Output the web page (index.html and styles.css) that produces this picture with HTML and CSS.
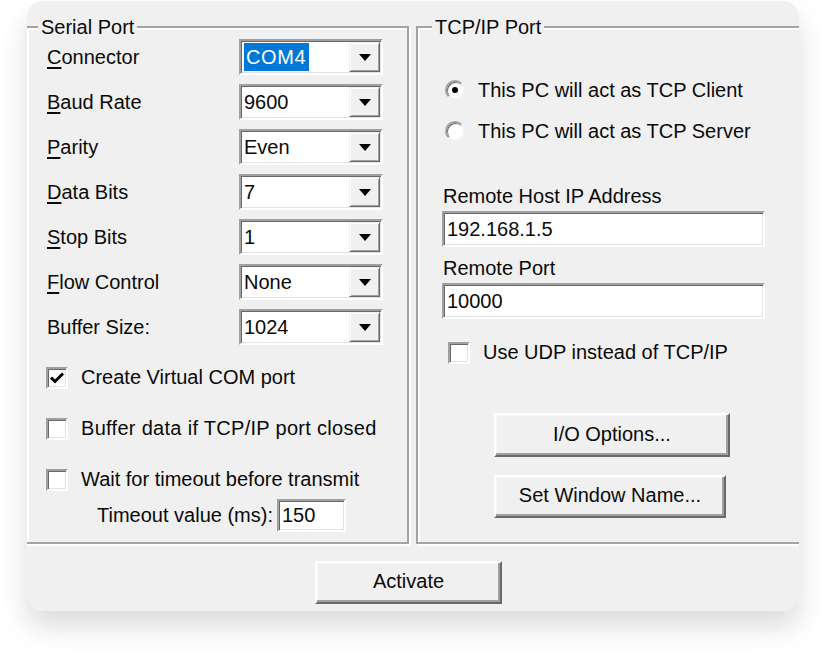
FILE: index.html
```html
<!DOCTYPE html>
<html>
<head>
<meta charset="utf-8">
<link rel="stylesheet" href="styles.css">
</head>
<body>
<div class="card">
  <div class="groups">
    <div class="group group-serial">
      <span class="legend">Serial Port</span>
      <div class="fields">
        <div class="field-row"><span class="label"><u>C</u>onnector</span><div class="combo"><span class="val"><span class="sel">COM4</span></span><span class="drop"><svg width="12" height="7" viewBox="0 0 12 7"><path d="M0 0H12L6 7Z" fill="#000"/></svg></span></div></div>
        <div class="field-row"><span class="label"><u>B</u>aud Rate</span><div class="combo"><span class="val">9600</span><span class="drop"><svg width="12" height="7" viewBox="0 0 12 7"><path d="M0 0H12L6 7Z" fill="#000"/></svg></span></div></div>
        <div class="field-row"><span class="label"><u>P</u>arity</span><div class="combo"><span class="val">Even</span><span class="drop"><svg width="12" height="7" viewBox="0 0 12 7"><path d="M0 0H12L6 7Z" fill="#000"/></svg></span></div></div>
        <div class="field-row"><span class="label"><u>D</u>ata Bits</span><div class="combo"><span class="val">7</span><span class="drop"><svg width="12" height="7" viewBox="0 0 12 7"><path d="M0 0H12L6 7Z" fill="#000"/></svg></span></div></div>
        <div class="field-row"><span class="label"><u>S</u>top Bits</span><div class="combo"><span class="val">1</span><span class="drop"><svg width="12" height="7" viewBox="0 0 12 7"><path d="M0 0H12L6 7Z" fill="#000"/></svg></span></div></div>
        <div class="field-row"><span class="label"><u>F</u>low Control</span><div class="combo"><span class="val">None</span><span class="drop"><svg width="12" height="7" viewBox="0 0 12 7"><path d="M0 0H12L6 7Z" fill="#000"/></svg></span></div></div>
        <div class="field-row"><span class="label">Buffer Size:</span><div class="combo"><span class="val">1024</span><span class="drop"><svg width="12" height="7" viewBox="0 0 12 7"><path d="M0 0H12L6 7Z" fill="#000"/></svg></span></div></div>
      </div>
      <div class="checks">
        <div class="check-row"><span class="checkbox"><svg width="16" height="14" viewBox="0 0 16 14"><path d="M2 6.5L6 10.5L14 2.5" fill="none" stroke="#000" stroke-width="3"/></svg></span><span>Create Virtual COM port</span></div>
        <div class="check-row"><span class="checkbox"></span><span class="wide">Buffer data if TCP/IP port closed</span></div>
        <div class="check-row"><span class="checkbox"></span><span>Wait for timeout before transmit</span></div>
      </div>
      <div class="timeout-row"><span>Timeout value (ms):</span><span class="textbox textbox-small">150</span></div>
    </div>
    <div class="group group-tcp">
      <span class="legend">TCP/IP Port</span>
      <div class="radios">
        <div class="radio-row"><span class="radio"><span class="dot"></span></span><span>This PC will act as TCP Client</span></div>
        <div class="radio-row"><span class="radio"></span><span>This PC will act as TCP Server</span></div>
      </div>
      <div class="tcp-fields">
        <span class="tcp-label">Remote Host IP Address</span>
        <span class="textbox textbox-wide">192.168.1.5</span>
        <span class="tcp-label tcp-label-second">Remote Port</span>
        <span class="textbox textbox-wide">10000</span>
      </div>
      <div class="check-row udp-row"><span class="checkbox"></span><span>Use UDP instead of TCP/IP</span></div>
      <div class="tcp-buttons">
        <button class="btn btn-io">I/O Options...</button>
        <button class="btn btn-name">Set Window Name...</button>
      </div>
    </div>
  </div>
  <div class="footer">
    <button class="btn btn-activate">Activate</button>
  </div>
</div>
</body>
</html>
```

FILE: styles.css
```css
* { box-sizing: border-box; }
html, body { margin: 0; padding: 0; background: #ffffff; }
body {
  font-family: "Liberation Sans", Arial, sans-serif;
  font-size: 20px;
  color: #0a0a0a;
  padding-bottom: 50px;
}
u { text-underline-offset: 3px; text-decoration-thickness: 1.5px; }

.card {
  margin: 1px 0 0 27px;
  width: 772px;
  height: 610px;
  background: #f0f0f0;
  border-radius: 16px;
  overflow: hidden;
  box-shadow: 0 16px 28px rgba(0,0,0,0.14);
  display: flex;
  flex-direction: column;
}

.groups {
  display: flex;
  margin-top: 25px;
  height: 518px;
  flex-shrink: 0;
}

.group {
  border: 2px solid #a3a3a3;
  box-shadow: inset 2px 2px 0 #ffffff, 2px 2px 0 #ffffff;
  height: 100%;
  display: flex;
  flex-direction: column;
  flex-shrink: 0;
}
.group-serial { margin-left: -2px; width: 384px; }
.group-tcp { margin-left: 7px; width: 420px; }

.legend {
  align-self: flex-start;
  height: 24px;
  line-height: 24px;
  margin-top: -13px;
  padding: 0 3px;
  background: #f0f0f0;
}
.group-serial .legend { margin-left: 11px; }
.group-tcp .legend { margin-left: 14px; }

.fields {
  display: flex;
  flex-direction: column;
  gap: 9px;
  padding-left: 20px;
}
.field-row {
  display: flex;
  align-items: center;
  height: 36px;
}
.label { width: 192px; }

.combo {
  width: 144px;
  height: 36px;
  display: flex;
  align-items: center;
  justify-content: space-between;
  background: #ffffff;
  border: 2px solid;
  border-color: #a0a0a0 #ffffff #ffffff #a0a0a0;
  box-shadow: inset 1px 1px 0 #696969, inset -1px -1px 0 #e3e3e3;
  padding: 0 1px 0 2px;
}
.val { display: flex; align-items: center; height: 28px; padding-left: 1px; }
.sel {
  background: #0078d7;
  color: #ffffff;
  height: 28px;
  line-height: 28px;
  padding: 0 3px 0 2px;
  letter-spacing: 0.6px;
}
.drop {
  width: 31px;
  height: 30px;
  display: flex;
  align-items: center;
  justify-content: center;
  background: #f0f0f0;
  border: 1px solid;
  border-color: #f0f0f0 #696969 #696969 #f0f0f0;
  box-shadow: inset 1px 1px 0 #ffffff, inset -1px -1px 0 #a0a0a0;
  padding-top: 1px;
}

.checks {
  display: flex;
  flex-direction: column;
  gap: 26px;
  margin-top: 20px;
  padding-left: 19px;
}
.check-row {
  display: flex;
  align-items: center;
  height: 25px;
  gap: 13px;
}
.wide { letter-spacing: 0.3px; }
.checkbox {
  width: 22px;
  height: 22px;
  flex-shrink: 0;
  background: #ffffff;
  border: 2px solid;
  border-color: #a0a0a0 #ffffff #ffffff #a0a0a0;
  box-shadow: inset 1px 1px 0 #696969, inset -1px -1px 0 #e3e3e3;
  display: flex;
  align-items: center;
  justify-content: center;
}

.timeout-row {
  display: flex;
  align-items: center;
  gap: 4px;
  margin-top: 7px;
  padding-left: 70px;
  height: 33px;
}
.textbox {
  display: flex;
  align-items: center;
  background: #ffffff;
  border: 2px solid;
  border-color: #a0a0a0 #ffffff #ffffff #a0a0a0;
  box-shadow: inset 1px 1px 0 #696969, inset -1px -1px 0 #e3e3e3;
  padding-left: 3px;
}
.textbox-small { width: 69px; height: 33px; }
.textbox-wide { width: 323px; height: 36px; }

.radios {
  display: flex;
  flex-direction: column;
  gap: 17px;
  margin-top: 39px;
  padding-left: 27px;
}
.radio-row {
  display: flex;
  align-items: center;
  height: 24px;
  gap: 13px;
}
.radio {
  width: 20px;
  height: 20px;
  flex-shrink: 0;
  border-radius: 50%;
  background: #ffffff;
  border: 2px solid;
  border-color: #a0a0a0 #f4f4f4 #f4f4f4 #a0a0a0;
  box-shadow: inset 1px 1px 0 #696969;
  display: flex;
  align-items: center;
  justify-content: center;
}
.dot { width: 6px; height: 6px; border-radius: 50%; background: #000; }

.tcp-fields {
  display: flex;
  flex-direction: column;
  align-items: flex-start;
  margin-top: 41px;
  padding-left: 24px;
}
.tcp-label { height: 24px; line-height: 24px; margin: 0 0 3px 1px; }
.tcp-label-second { margin-top: 9px; }

.udp-row { margin-top: 21px; padding-left: 30px; }

.tcp-buttons {
  display: flex;
  flex-direction: column;
  align-items: flex-start;
  gap: 18px;
  margin-top: 48px;
  padding-left: 76px;
}

.btn {
  font-family: "Liberation Sans", Arial, sans-serif;
  font-size: 20px;
  color: #0a0a0a;
  background: #f0f0f0;
  border: 2px solid;
  border-color: #ffffff #696969 #696969 #ffffff;
  box-shadow: inset -2px -2px 0 #a0a0a0, inset 1px 1px 0 #f8f8f8;
  padding: 0 0 2px 0;
  margin: 0;
}
.btn-io { width: 236px; height: 44px; }
.btn-name { width: 232px; height: 43px; }

.footer { padding: 17px 0 0 288px; }
.btn-activate { width: 187px; height: 43px; }
```
